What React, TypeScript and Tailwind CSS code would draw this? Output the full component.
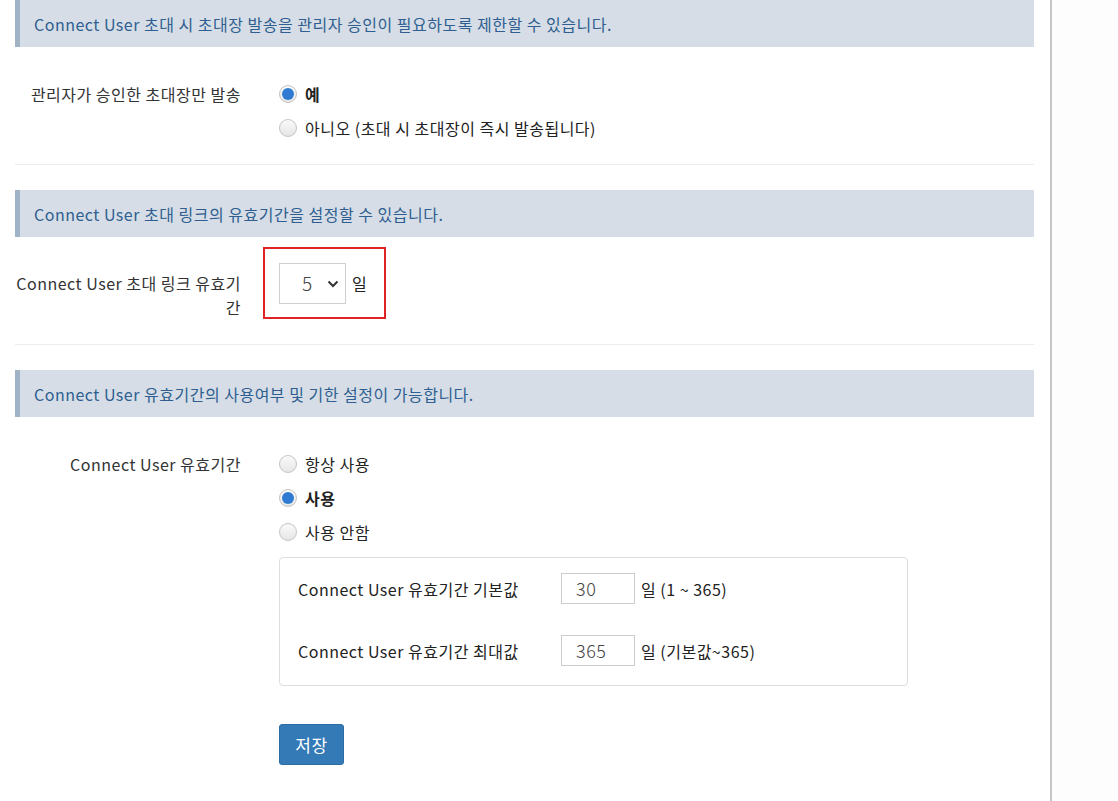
import React from "react";

const font = { fontFamily: '"Noto Sans CJK KR", "Noto Sans", sans-serif' };

function Radio({ checked, label, bold }: { checked?: boolean; label: string; bold?: boolean }) {
  return (
    <div className="flex h-[34px] items-center">
      <span className="flex h-[18px] w-[18px] items-center justify-center rounded-full border border-[#c4c4c4] bg-gradient-to-b from-[#fafafa] to-[#e6e6e6]">
        {checked && <span className="h-[12px] w-[12px] rounded-full bg-[#2f7bd3]" />}
      </span>
      <span className={"ml-[8px] text-[16px] text-[#222] " + (bold ? "font-bold" : "")}>{label}</span>
    </div>
  );
}

function Header({ text }: { text: string }) {
  return (
    <div className="flex h-[47px] items-center border-l-[5px] border-[#9fb2c6] bg-[#d6dde6] pl-[14px] text-[16px] text-[#2e5f90]">
      {text}
    </div>
  );
}

export default function App() {
  return (
    <div className="flex min-h-[801px] bg-white tracking-[0.5px]" style={font}>
      <div className="w-[1050px] shrink-0 pl-[15px] pr-[16px] text-[#333]">
        <Header text="Connect User 초대 시 초대장 발송을 관리자 승인이 필요하도록 제한할 수 있습니다." />
        <div className="flex pt-[30px] pb-[19px]">
          <div className="w-[226px] pt-[5px] text-right text-[16px] leading-[24px]">관리자가 승인한 초대장만 발송</div>
          <div className="ml-[38px]">
            <Radio checked bold label="예" />
            <Radio label="아니오 (초대 시 초대장이 즉시 발송됩니다)" />
          </div>
        </div>
        <div className="h-px bg-[#ececec]" />
        <div className="mt-[25px]">
          <Header text="Connect User 초대 링크의 유효기간을 설정할 수 있습니다." />
        </div>
        <div className="flex pt-[10px] pb-[25px]">
          <div className="w-[226px] pt-[24px] text-right text-[16px] leading-[24px]">
            Connect User 초대 링크 유효기
            <br />간
          </div>
          <div className="ml-[22px] flex h-[72px] w-[123px] items-start border-2 border-[#e02424] pl-[14px] pt-[14px]">
            <div className="flex h-[41px] w-[67px] items-center border border-[#cfcfcf] bg-white pl-[22px] text-[19px] font-light text-[#444]">
              <span>5</span>
              <svg className="ml-[14px]" width="12" height="8" viewBox="0 0 12 8">
                <path d="M1.5 1.5 L6 6 L10.5 1.5" fill="none" stroke="#333" strokeWidth="2" />
              </svg>
            </div>
            <span className="ml-[6px] mt-[8px] text-[16px] text-[#222]">일</span>
          </div>
        </div>
        <div className="h-px bg-[#ececec]" />
        <div className="mt-[25px]">
          <Header text="Connect User 유효기간의 사용여부 및 기한 설정이 가능합니다." />
        </div>
        <div className="flex pt-[30px]">
          <div className="w-[226px] pt-[5px] text-right text-[16px] leading-[24px]">Connect User 유효기간</div>
          <div className="ml-[38px]">
            <Radio label="항상 사용" />
            <Radio checked bold label="사용" />
            <Radio label="사용 안함" />
            <div className="mt-[8px] w-[629px] rounded-[4px] border border-[#dedede] pt-[15px] pb-[19px] pl-[18px]">
              <div className="flex items-center">
                <div className="w-[263px] text-[16px] text-[#222]">Connect User 유효기간 기본값</div>
                <div className="flex h-[31px] w-[74px] items-center border border-[#cccccc] pl-[14px] text-[18px] font-light text-[#444]">30</div>
                <span className="ml-[6px] text-[16px] text-[#222]">일 (1 ~ 365)</span>
              </div>
              <div className="mt-[31px] flex items-center">
                <div className="w-[263px] text-[16px] text-[#222]">Connect User 유효기간 최대값</div>
                <div className="flex h-[31px] w-[74px] items-center border border-[#cccccc] pl-[14px] text-[18px] font-light text-[#444]">365</div>
                <span className="ml-[6px] text-[16px] text-[#222]">일 (기본값~365)</span>
              </div>
            </div>
            <button className="mt-[38px] h-[41px] w-[65px] rounded-[3px] border border-[#2e6da4] bg-[#337ab7] text-[17px] text-white">
              저장
            </button>
          </div>
        </div>
      </div>
      <div className="w-[2px] shrink-0 bg-[#c6c6c6]" />
      <div className="flex-1 bg-[#fdfdfd]" />
    </div>
  );
}
